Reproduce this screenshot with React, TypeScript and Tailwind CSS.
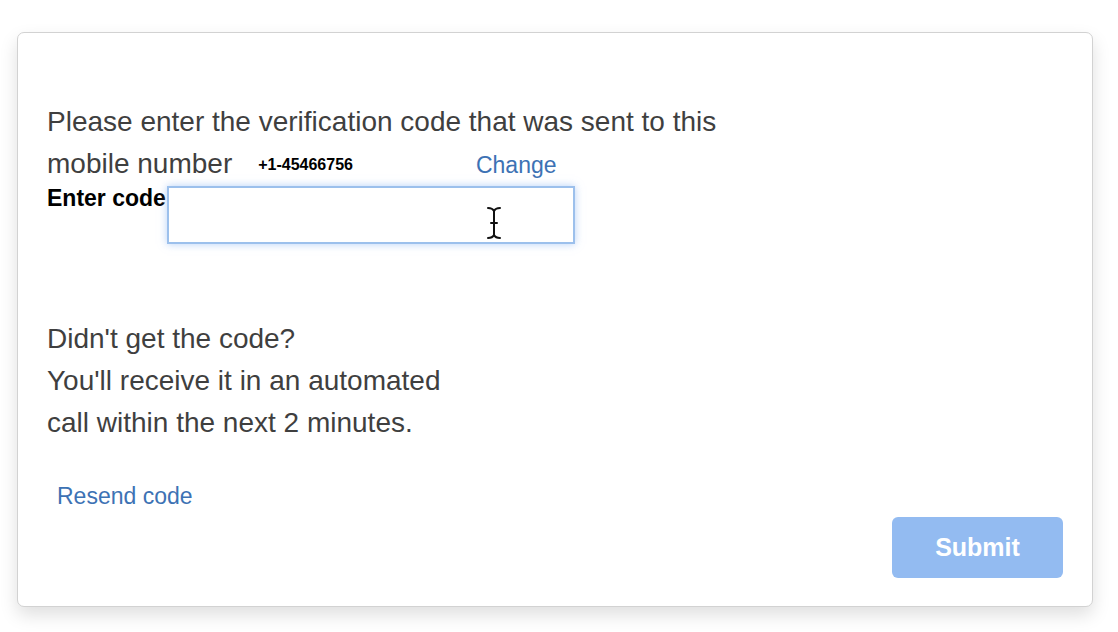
import React from 'react';

const font = { fontFamily: '"Liberation Sans", Arial, Helvetica, sans-serif' };

const IBeam = () => (
  <svg width="16" height="34" viewBox="0 0 16 34" className="absolute left-[319px] top-[20px]">
    <path
      d="M2 2c3 0 5 1 6 3c1-2 3-3 6-3M8 5v24M2 32c3 0 5-1 6-3c1 2 3 3 6 3M5 17h6"
      fill="none"
      stroke="#111"
      strokeWidth="2"
      strokeLinecap="round"
    />
  </svg>
);

export default function App() {
  return (
    <div className="min-h-screen bg-white pl-[17px] pt-[32px]" style={font}>
      <div className="w-[1076px] h-[575px] rounded-[7px] border border-[#d2d2d2] bg-white shadow-[0_8px_18px_rgba(0,0,0,0.13)] px-[29px] pt-[68px] flex flex-col">
        <p className="w-[720px] text-[28px] leading-[42px] text-[#3f3f3f]">
          Please enter the verification code that was sent to this
        </p>
        <div className="flex items-baseline h-[42px]">
          <span className="text-[28px] leading-[42px] text-[#3f3f3f]">mobile number</span>
          <span className="ml-[26px] text-[16px] font-bold text-black bg-white -translate-y-[3px]">+1-45466756</span>
          <a className="ml-[123px] text-[23px] text-[#3d72b4]">Change</a>
        </div>
        <div className="flex items-start">
          <span className="text-[23px] font-bold text-black leading-[26px]">Enter code</span>
          <div className="relative ml-[1px] mt-[1px]">
            <input
              className="w-[408px] h-[58px] border-2 border-[#9cc0ec] bg-white outline-none shadow-[0_0_8px_rgba(120,170,240,0.55)]"
              type="text"
            />
            <IBeam />
          </div>
        </div>
        <p className="mt-[74px] w-[420px] text-[28px] leading-[42px] text-[#3f3f3f]">
          Didn't get the code?
          <br />
          You'll receive it in an automated call within the next 2 minutes.
        </p>
        <a className="mt-[38px] ml-[10px] text-[23px] leading-[28px] text-[#3d72b4]">Resend code</a>
        <div className="flex justify-end mt-[7px]">
          <button className="w-[171px] h-[61px] rounded-[6px] bg-[#93bbf1] text-white text-[25px] font-bold">
            Submit
          </button>
        </div>
      </div>
    </div>
  );
}
